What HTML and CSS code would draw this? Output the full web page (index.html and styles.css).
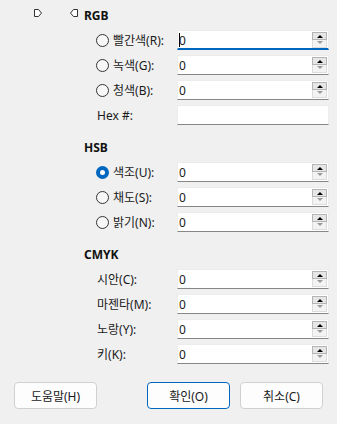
FILE: index.html
```html
<!DOCTYPE html>
<html lang="ko">
<head>
    <meta charset="UTF-8">
    <title>색 선택</title>
    <link rel="stylesheet" href="styles.css">
</head>
<body>
    <div class="dialog">
        <div class="main">
            <!-- slider markers -->
            <div class="slider-col">
                <svg class="marker" width="8" height="8" viewBox="0 0 8 8"><path d="M0.5 0.5H4.5L7.5 4L4.5 7.5H0.5Z" fill="#fff" stroke="#333"/></svg>
                <svg class="marker" width="8" height="8" viewBox="0 0 8 8"><path d="M7.5 0.5H3.5L0.5 4L3.5 7.5H7.5Z" fill="#fff" stroke="#333"/></svg>
            </div>

            <div class="fields">
                <div class="group-title first">RGB</div>
                <div class="row">
                    <label class="lbl"><span class="radio"></span>빨간색(R):</label>
                    <div class="field focused"><span class="caret"></span>0<span class="spin"><span class="up"></span><span class="down"></span></span></div>
                </div>
                <div class="row">
                    <label class="lbl"><span class="radio"></span>녹색(G):</label>
                    <div class="field">0<span class="spin"><span class="up"></span><span class="down"></span></span></div>
                </div>
                <div class="row">
                    <label class="lbl"><span class="radio"></span>청색(B):</label>
                    <div class="field">0<span class="spin"><span class="up"></span><span class="down"></span></span></div>
                </div>
                <div class="row">
                    <label class="lbl plain">Hex #:</label>
                    <div class="field"></div>
                </div>

                <div class="group-title">HSB</div>
                <div class="row">
                    <label class="lbl"><span class="radio checked"></span>색조(U):</label>
                    <div class="field">0<span class="spin"><span class="up"></span><span class="down"></span></span></div>
                </div>
                <div class="row">
                    <label class="lbl"><span class="radio"></span>채도(S):</label>
                    <div class="field">0<span class="spin"><span class="up"></span><span class="down"></span></span></div>
                </div>
                <div class="row">
                    <label class="lbl"><span class="radio"></span>밝기(N):</label>
                    <div class="field">0<span class="spin"><span class="up"></span><span class="down"></span></span></div>
                </div>

                <div class="group-title">CMYK</div>
                <div class="row">
                    <label class="lbl plain">시안(C):</label>
                    <div class="field">0<span class="spin"><span class="up"></span><span class="down"></span></span></div>
                </div>
                <div class="row">
                    <label class="lbl plain">마젠타(M):</label>
                    <div class="field">0<span class="spin"><span class="up"></span><span class="down"></span></span></div>
                </div>
                <div class="row">
                    <label class="lbl plain">노랑(Y):</label>
                    <div class="field">0<span class="spin"><span class="up"></span><span class="down"></span></span></div>
                </div>
                <div class="row">
                    <label class="lbl plain">키(K):</label>
                    <div class="field">0<span class="spin"><span class="up"></span><span class="down"></span></span></div>
                </div>
            </div>
        </div>

        <!-- dialog buttons -->
        <div class="buttons">
            <button class="btn">도움말(H)</button>
            <div class="btn-group">
                <button class="btn default">확인(O)</button>
                <button class="btn">취소(C)</button>
            </div>
        </div>
    </div>
</body>
</html>
```

FILE: styles.css
```css
/* Colors */
:root {
    --bg-color: #f0f0f0;
    --text-color: #1a1a1a;
    --accent-color: #0067c0;
    --line-color: #868686;
}

body {
    margin: 0;
    background: var(--bg-color);
    color: var(--text-color);
    font-family: "Noto Sans", "Noto Sans CJK KR", sans-serif;
    font-size: 12px;
}
.dialog {
    width: 337px;
    height: 424px;
    display: flex;
    flex-direction: column;
}
.main {
    display: flex;
}
.slider-col {
    width: 84px;
    display: flex;
    align-items: flex-start;
    gap: 28px;
    padding: 9px 0 0 34px;
    box-sizing: border-box;
}
.marker {
    display: block;
}
.fields {
    width: 245px;
    display: flex;
    flex-direction: column;
}

/* Group headings */
.group-title {
    height: 20px;
    line-height: 20px;
    font-weight: bold;
    font-size: 12px;
    margin: 8px 0 4px;
    color: #111;
}
.group-title.first {
    margin-top: 6px;
}

/* Rows */
.row {
    display: flex;
    align-items: center;
    height: 20px;
    margin-bottom: 5px;
}
.row:last-child {
    margin-bottom: 0;
}
.lbl {
    width: 93px;
    display: flex;
    align-items: center;
    padding-left: 12px;
    box-sizing: border-box;
    white-space: nowrap;
}
.lbl.plain {
    padding-left: 13px;
}
.radio {
    width: 13px;
    height: 13px;
    border: 1px solid #333;
    border-radius: 50%;
    box-sizing: border-box;
    margin-right: 4px;
    background: #f7f7f7;
    flex: none;
}
.radio.checked {
    border: 4px solid var(--accent-color);
    background: #fff;
}

/* Number fields */
.field {
    position: relative;
    width: 152px;
    height: 20px;
    line-height: 19px;
    background: #fff;
    border: 1px solid #ececec;
    border-bottom-color: var(--line-color);
    box-sizing: border-box;
    padding-left: 1px;
}
.field.focused {
    border-bottom: 2px solid var(--accent-color);
}
.caret {
    display: inline-block;
    width: 1px;
    height: 14px;
    background: #000;
    vertical-align: -2px;
    margin-right: -1px;
}
.spin {
    position: absolute;
    right: 1px;
    top: 0;
    width: 15px;
    display: flex;
    flex-direction: column;
}
.spin span {
    height: 8px;
    box-sizing: border-box;
    position: relative;
}
.spin .up {
    margin-top: 1px;
    background: #e6e6e6;
    border: 1px solid #b4b4b4;
}
.spin .down {
    background: #f3f3f3;
    border: 1px solid #dcdcdc;
    border-top: none;
}
.spin .up::after,
.spin .down::after {
    content: "";
    position: absolute;
    left: 4px;
    top: 2px;
    border-left: 3px solid transparent;
    border-right: 3px solid transparent;
}
.spin .up::after {
    border-bottom: 3px solid #000;
}
.spin .down::after {
    top: 1px;
    border-top: 3px solid #9a9a9a;
}

/* Buttons */
.buttons {
    display: flex;
    justify-content: space-between;
    padding: 0 14px;
    margin-top: 18px;
}
.btn-group {
    display: flex;
    gap: 10px;
}
.btn {
    width: 83px;
    height: 27px;
    background: #fdfdfd;
    border: 1px solid #d0d0d0;
    border-radius: 4px;
    font-family: "Noto Sans", "Noto Sans CJK KR", sans-serif;
    font-size: 12px;
    color: var(--text-color);
    padding: 0;
}
.btn.default {
    border-color: var(--accent-color);
}
```
